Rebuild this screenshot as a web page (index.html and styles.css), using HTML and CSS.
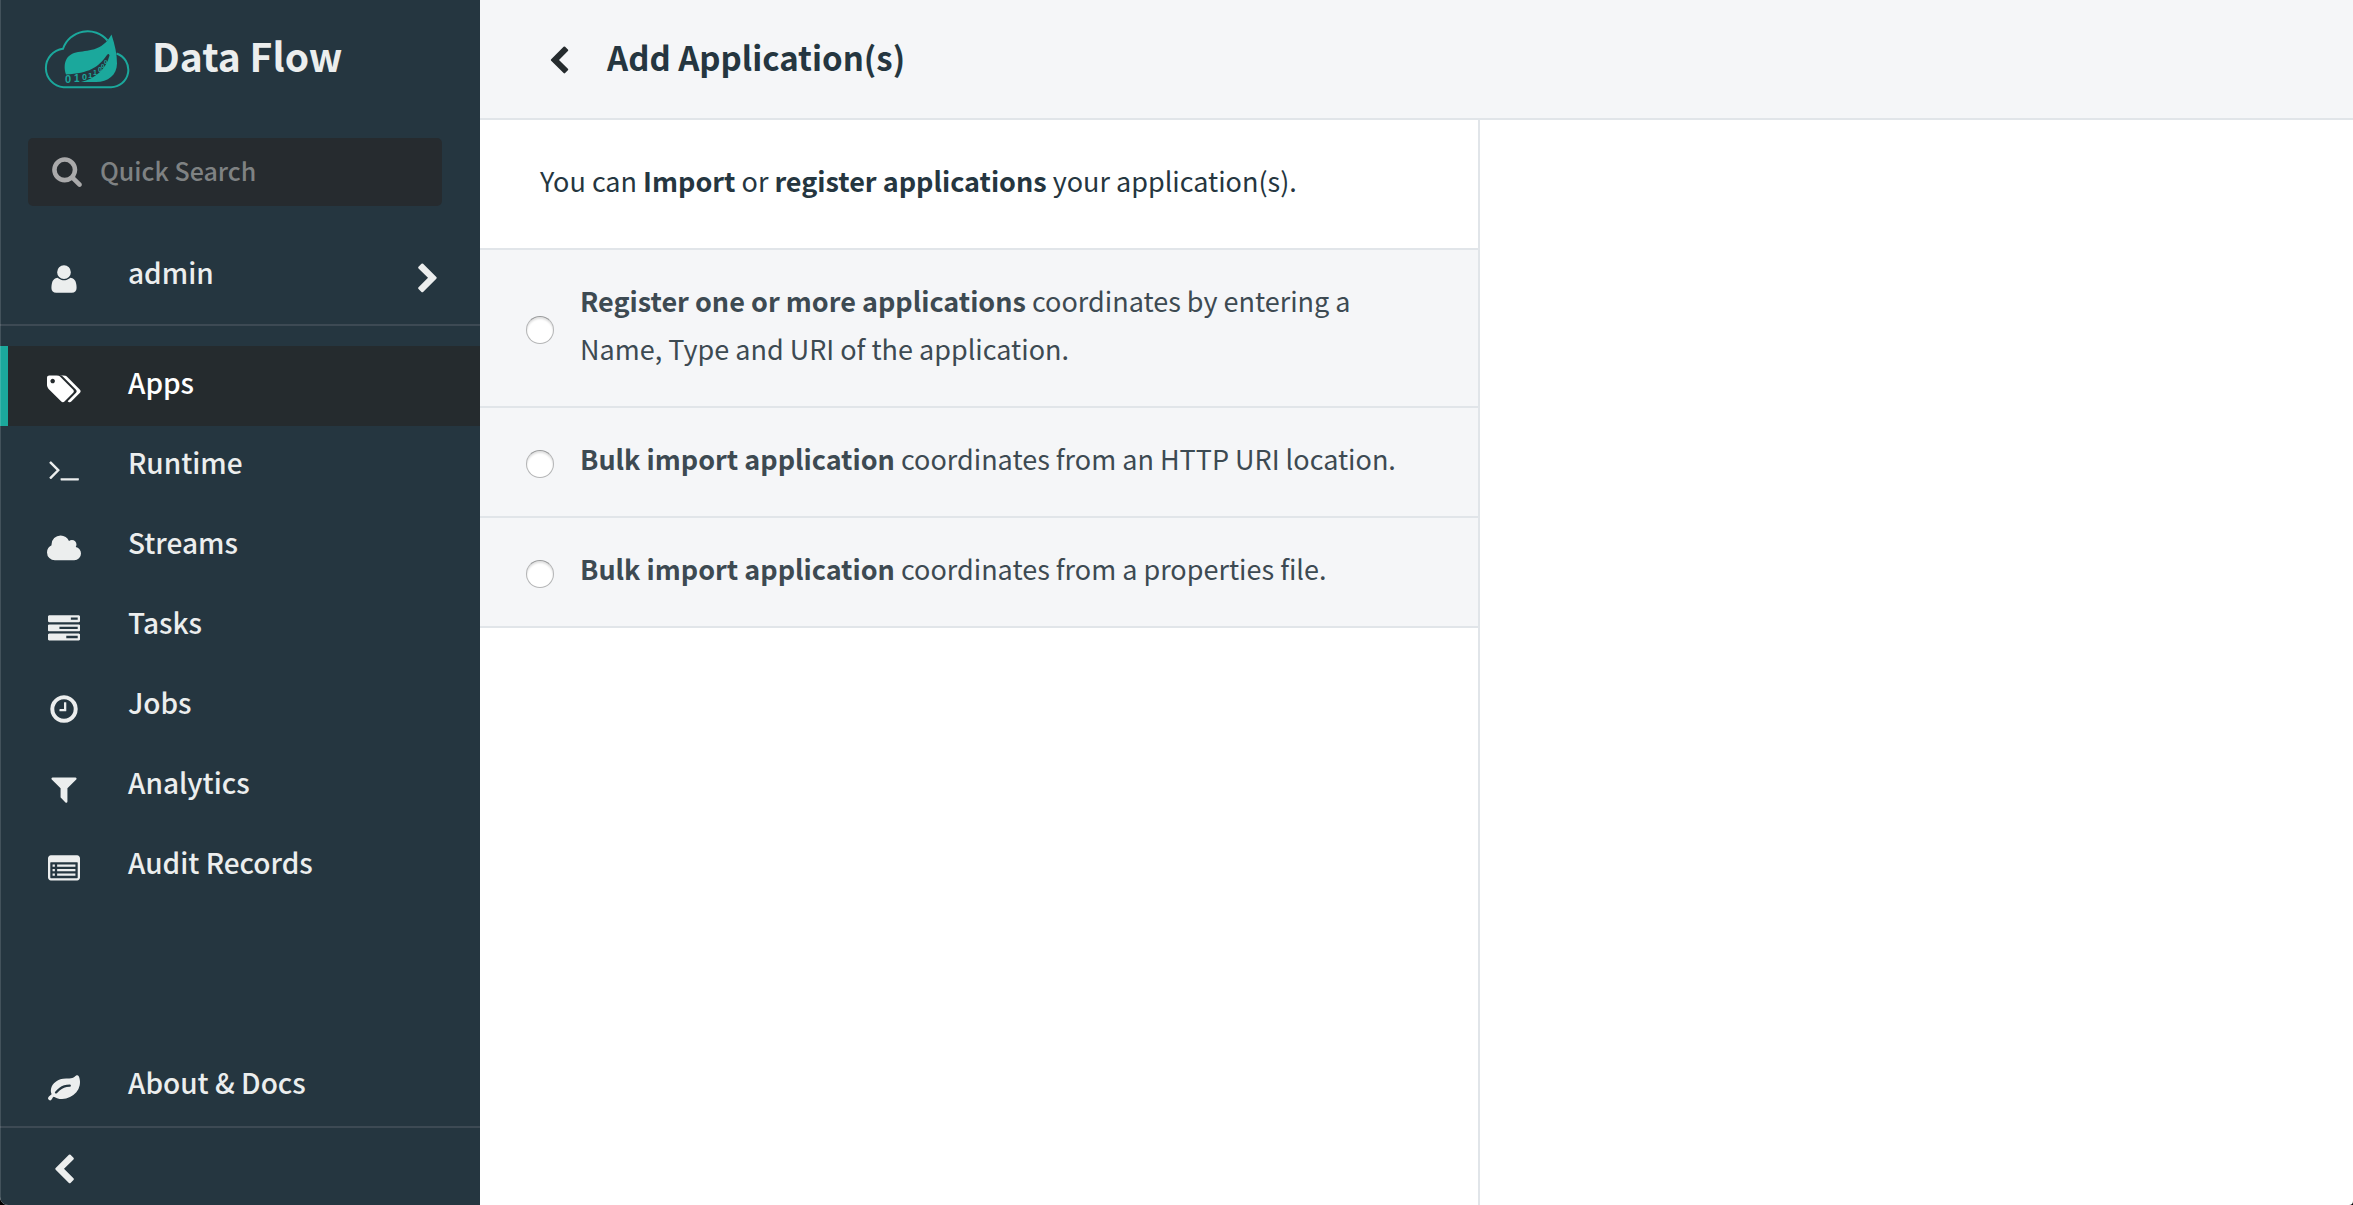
FILE: index.html
```html
<!DOCTYPE html>
<html lang="en">
<head>
<meta charset="utf-8">
<meta name="viewport" content="width=device-width, initial-scale=1">
<title>Data Flow - Add Application(s)</title>
<link rel="stylesheet" href="styles.css">
</head>
<body>
<div class="app">
  <aside class="sidebar">
    <a class="brand" href="#">
      <svg class="brand-logo" viewBox="14 9 87 59" aria-hidden="true">
        <path class="logo-line" d="M78.500 19.500A26 26 0 0 0 34 27.800A19.300 19.300 0 0 0 34.500 66.200H81.500A17.300 17.300 0 0 0 87.500 32.500"/>
        <path class="logo-fill" d="M82.500 13.500C86 24 88 33 88 42.500C88 54 79 61 67 61H52C66 58 77 48 80.500 34.500C80 32.500 79 32.500 78 34C69 47 60 52 37 53.500C34 44 36 34 47 31.500C58 29 73 31 82.500 13.500Z"/>
        <g class="logo-digits">
          <text x="36" y="62" font-size="11">0</text>
          <text x="45" y="61" font-size="10">1</text>
          <text x="53" y="59" font-size="9">0</text>
          <text x="59" y="57" font-size="8">1</text>
          <text x="64" y="54" font-size="7">1</text>
          <text x="69" y="51" font-size="7">0</text>
          <text x="72" y="47" font-size="6">0</text>
          <text x="75" y="43" font-size="6">0</text>
        </g>
      </svg>
      <span class="brand-name">Data Flow</span>
    </a>

    <label class="search">
      <svg class="search-icon" viewBox="0 0 1792 1792" aria-hidden="true"><path d="M1216 832q0-185-131.500-316.500t-316.500-131.500-316.500 131.500-131.500 316.500 131.500 316.500 316.500 131.500 316.500-131.500 131.500-316.500zm512 832q0 52-38 90t-90 38q-54 0-90-38l-343-342q-179 124-399 124-143 0-273.500-55.500t-225-150-150-225-55.500-273.500 55.500-273.500 150-225 225-150 273.500-55.500 273.500 55.500 225 150 150 225 55.500 273.500q0 220-124 399l343 343q37 37 37 90z"/></svg>
      <input class="search-input" type="text" placeholder="Quick Search" aria-label="Quick Search">
    </label>

    <button class="nav-item user" type="button">
      <svg class="nav-icon" viewBox="0 0 1792 1792" aria-hidden="true"><path d="M1600 1405q0 120-73 189.500t-194 69.500h-874q-121 0-194-69.500t-73-189.500q0-53 3.500-103.500t14-109 26.500-108.500 43-97.500 62-81 85.500-53.500 111.500-20q9 0 42 21.500t74.500 48 108 48 133.500 21.500 133.500-21.500 108-48 74.500-48 42-21.500q61 0 111.500 20t85.500 53.500 62 81 43 97.500 26.500 108.500 14 109 3.500 103.500zm-320-893q0 159-112.500 271.500t-271.500 112.500-271.500-112.500-112.500-271.500 112.500-271.500 271.500-112.500 271.500 112.500 112.500 271.500z"/></svg>
      <span class="nav-label">admin</span>
      <svg class="nav-icon" viewBox="0 0 1792 1792" aria-hidden="true"><path d="M1363 877l-742 742q-19 19-45 19t-45-19l-166-166q-19-19-19-45t19-45l531-531-531-531q-19-19-19-45t19-45l166-166q19-19 45-19t45 19l742 742q19 19 19 45t-19 45z"/></svg>
    </button>

    <nav class="nav">
      <a class="nav-item active" href="#">
        <svg class="nav-icon" viewBox="0 0 1920 1792" aria-hidden="true"><path d="M448 448q0-53-37.500-90.500t-90.500-37.500-90.500 37.500-37.500 90.500 37.500 90.500 90.500 37.500 90.500-37.500 37.500-90.500zm1067 576q0 53-37 90l-491 492q-39 37-91 37-53 0-90-37l-715-716q-38-37-64.500-101t-26.500-117v-416q0-52 38-90t90-38h416q53 0 117 26.500t102 64.500l715 714q37 39 37 91zm384 0q0 53-37 90l-491 492q-39 37-91 37-36 0-59-14t-53-45l470-470q37-37 37-90 0-52-37-91l-715-714q-38-38-102-64.500t-117-26.500h224q53 0 117 26.500t102 64.500l715 714q37 39 37 91z"/></svg>
        <span class="nav-label">Apps</span>
      </a>
      <a class="nav-item" href="#">
        <svg class="nav-icon" viewBox="0 0 1792 1792" aria-hidden="true"><path d="M649 983l-466 466q-10 10-23 10t-23-10l-50-50q-10-10-10-23t10-23l393-393-393-393q-10-10-10-23t10-23l50-50q10-10 23-10t23 10l466 466q10 10 10 23t-10 23zm1079 457v64q0 14-9 23t-23 9h-960q-14 0-23-9t-9-23v-64q0-14 9-23t23-9h960q14 0 23 9t9 23z"/></svg>
        <span class="nav-label">Runtime</span>
      </a>
      <a class="nav-item" href="#">
        <svg class="nav-icon" viewBox="0 0 1920 1792" aria-hidden="true"><path d="M1920 1152q0 159-112.500 271.500t-271.500 112.500h-1088q-185 0-316.500-131.500t-131.500-316.500q0-132 71-241.500t187-163.500q-2-28-2-43 0-212 150-362t362-150q158 0 286.500 88t187.500 230q70-62 166-62 106 0 181 75t75 181q0 75-41 138 129 30 213 134.500t84 239.500z"/></svg>
        <span class="nav-label">Streams</span>
      </a>
      <a class="nav-item" href="#">
        <svg class="nav-icon" viewBox="0 0 1792 1792" aria-hidden="true"><path d="M1024 1408h640v-128h-640v128zm-384-512h1024v-128h-1024v128zm640-512h384v-128h-384v128zm512 832v256q0 26-19 45t-45 19h-1664q-26 0-45-19t-19-45v-256q0-26 19-45t45-19h1664q26 0 45 19t19 45zm0-512v256q0 26-19 45t-45 19h-1664q-26 0-45-19t-19-45v-256q0-26 19-45t45-19h1664q26 0 45 19t19 45zm0-512v256q0 26-19 45t-45 19h-1664q-26 0-45-19t-19-45v-256q0-26 19-45t45-19h1664q26 0 45 19t19 45z"/></svg>
        <span class="nav-label">Tasks</span>
      </a>
      <a class="nav-item" href="#">
        <svg class="nav-icon" viewBox="0 0 1792 1792" aria-hidden="true"><path d="M1024 544v448q0 14-9 23t-23 9h-320q-14 0-23-9t-9-23v-64q0-14 9-23t23-9h224v-352q0-14 9-23t23-9h64q14 0 23 9t9 23zm416 352q0-148-73-273t-198-198-273-73-273 73-198 198-73 273 73 273 198 198 273 73 273-73 198-198 73-273zm224 0q0 209-103 385.500t-279.500 279.500-385.500 103-385.500-103-279.500-279.500-103-385.500 103-385.500 279.500-279.500 385.500-103 385.500 103 279.500 279.500 103 385.500z"/></svg>
        <span class="nav-label">Jobs</span>
      </a>
      <a class="nav-item" href="#">
        <svg class="nav-icon" viewBox="0 0 1792 1792" aria-hidden="true"><path d="M1595 295q17 41-14 70l-493 493v742q0 42-39 59-13 5-25 5-27 0-45-19l-256-256q-19-19-19-45v-486l-493-493q-31-29-14-70 17-39 59-39h1280q42 0 59 39z"/></svg>
        <span class="nav-label">Analytics</span>
      </a>
      <a class="nav-item" href="#">
        <svg class="nav-icon" viewBox="0 0 1792 1792" aria-hidden="true"><path fill-rule="evenodd" d="M160 128h1472q66 0 113 47t47 113v1088q0 66-47 113t-113 47h-1472q-66 0-113-47t-47-113v-1088q0-66 47-113t113-47zM160 512q-32 0-32 32v832q0 32 32 32h1472q32 0 32-32v-832q0-32-32-32z"/><path d="M256 640h128v128h-128zM256 896h128v128h-128zM256 1152h128v128h-128zM512 640h1024v128h-1024zM512 896h1024v128h-1024zM512 1152h1024v128h-1024z"/></svg>
        <span class="nav-label">Audit Records</span>
      </a>
    </nav>

    <div class="sidebar-foot">
      <a class="nav-item" href="#">
        <svg class="nav-icon" viewBox="0 0 1792 1792" aria-hidden="true"><path d="M1280 704q0-26-19-45t-45-19q-172 0-318 49.500t-259.500 134-235.500 219.500q-19 21-19 45 0 26 19 45t45 19q24 0 45-19 27-24 74-71t67-66q137-124 268.500-176t313.500-52q26 0 45-19t19-45zm512-198q0 95-20 193-46 224-184.500 383t-357.500 268q-214 108-438 108-148 0-286-47-15-5-88-42t-96-37q-16 0-39.500 32t-45 70-52.500 70-60 32q-43 0-63.500-17.500t-45.500-59.500q-2-4-6-11t-5.500-10-3-9.500-1.500-13.500q0-35 31-73.500t68-65.500 68-56 31-48q0-4-14-38t-16-44q-9-51-9-104 0-115 43.500-220t119-184.500 170.500-139 204-95.500q55-18 145-25.500t179.500-9 178.500-6 163.500-24 113.500-56.500l29.500-29.500 29.500-28 27-20 36.500-16 43.500-4.500q39 0 70.500 46t47.500 112 24 124 8 96z"/></svg>
        <span class="nav-label">About &amp; Docs</span>
      </a>
      <button class="collapse" type="button" aria-label="Collapse menu">
        <svg class="nav-icon" viewBox="0 0 1792 1792" aria-hidden="true"><path d="M1427 301l-531 531 531 531q19 19 19 45t-19 45l-166 166q-19 19-45 19t-45-19l-742-742q-19-19-19-45t19-45l742-742q19-19 45-19t45 19l166 166q19 19 19 45t-19 45z"/></svg>
      </button>
    </div>
  </aside>

  <main class="main">
    <header class="page-head">
      <a class="back" href="#" aria-label="Back">
        <svg class="back-icon" viewBox="0 0 1792 1792" aria-hidden="true"><path d="M1427 301l-531 531 531 531q19 19 19 45t-19 45l-166 166q-19 19-45 19t-45-19l-742-742q-19-19-19-45t19-45l742-742q19-19 45-19t45 19l166 166q19 19 19 45t-19 45z"/></svg>
      </a>
      <h1 class="page-title">Add Application(s)</h1>
    </header>
    <div class="columns">
      <section class="panel">
        <p class="intro">You can <strong>Import</strong> or <strong>register applications</strong> your application(s).</p>
        <label class="option">
          <input class="option-radio" type="radio" name="method">
          <span class="option-text"><strong>Register one or more applications</strong> coordinates by entering a Name, Type and URI of the application.</span>
        </label>
        <label class="option">
          <input class="option-radio" type="radio" name="method">
          <span class="option-text"><strong>Bulk import application</strong> coordinates from an HTTP URI location.</span>
        </label>
        <label class="option">
          <input class="option-radio" type="radio" name="method">
          <span class="option-text"><strong>Bulk import application</strong> coordinates from a properties file.</span>
        </label>
      </section>
    </div>
  </main>
</div>
</body>
</html>
```

FILE: styles.css
```css
* {
  box-sizing: border-box;
}

body {
  margin: 0;
  background: #000;
  color: #253640;
  font-family: "Noto Sans CJK SC", "Open Sans", sans-serif;
  font-size: 27px;
  line-height: 48px;
}

button,
input {
  font: inherit;
  color: inherit;
}

strong {
  font-weight: 700;
}

.app {
  display: flex;
  min-height: 100vh;
  overflow: hidden;
  background: #fff;
  border-radius: 0 0 4px 8px;
}

/* Sidebar */
.sidebar {
  position: relative;
  display: flex;
  flex-direction: column;
  flex: 0 0 480px;
  background: #253640;
  color: #eceeee;
}

.sidebar::after {
  content: "";
  position: absolute;
  inset: 0 auto 0 0;
  width: 1px;
  background: rgba(255, 255, 255, 0.14);
}

.brand {
  display: flex;
  align-items: center;
  gap: 22px;
  padding: 26px 43px 45px;
  color: inherit;
  text-decoration: none;
}

.brand-logo {
  width: 87px;
  height: 59px;
}

.logo-line {
  fill: none;
  stroke: #1ba89c;
  stroke-width: 2;
}

.logo-fill,
.logo-digits {
  fill: #1ba89c;
}

.logo-digits {
  font-family: "Liberation Sans", sans-serif;
  font-weight: 700;
}

.brand-name {
  font-size: 39px;
  font-weight: 700;
  line-height: 59px;
  margin-bottom: 8px;
}

.search {
  display: flex;
  align-items: center;
  gap: 17px;
  height: 68px;
  margin: 0 38px 30px 28px;
  padding: 0 23px 2px;
  border-radius: 5px;
  background: #262b2f;
}

.search-icon {
  flex: none;
  width: 32px;
  height: 32px;
  fill: #aaaaab;
}

.search-input {
  flex: 1;
  min-width: 0;
  padding: 0 0 2px;
  border: 0;
  outline: 0;
  background: transparent;
  font-size: 25px;
  font-weight: 500;
}

.search-input::placeholder {
  color: #7f8283;
  opacity: 1;
}

.nav-item {
  display: flex;
  align-items: center;
  gap: 47px;
  width: 100%;
  height: 80px;
  padding: 0 35px 0 47px;
  border: 0;
  background: transparent;
  color: inherit;
  font-size: 28px;
  font-weight: 500;
  text-align: left;
  text-decoration: none;
}

.nav-icon {
  flex: none;
  width: 34px;
  height: 32px;
  margin-top: 5px;
  fill: currentColor;
}

.nav-label {
  flex: 1;
  margin-bottom: 9px;
}

.user {
  height: 90px;
  padding-bottom: 8px;
  border-bottom: 2px solid #3d4a54;
}

.nav {
  padding: 20px 0;
}

.active {
  border-left: 8px solid #1ba89c;
  padding-left: 39px;
  background: #252b2e;
  color: #fff;
}

.sidebar-foot {
  margin-top: auto;
}

.collapse {
  display: flex;
  align-items: center;
  width: 100%;
  height: 79px;
  padding: 2px 47px 0;
  border: 0;
  border-top: 2px solid #3d4a54;
  background: transparent;
}

/* Page */
.main {
  display: flex;
  flex: 1;
  flex-direction: column;
  min-width: 0;
}

.page-head {
  display: flex;
  align-items: center;
  gap: 33px;
  height: 120px;
  padding: 0 64px;
  border-bottom: 2px solid #e1e5e9;
  background: #f5f6f8;
}

.back {
  display: flex;
  color: #252b2e;
}

.back-icon {
  width: 30px;
  height: 30px;
  margin-top: 4px;
  fill: currentColor;
}

.page-title {
  margin: 0 0 4px;
  font-size: 33px;
  font-weight: 700;
}

.columns {
  display: grid;
  grid-template-columns: minmax(0, 1000px) minmax(0, 1fr);
  flex: 1;
}

.panel {
  border-right: 2px solid #e1e5e9;
}

.intro {
  margin: 0;
  padding: 37px 60px 43px;
  border-bottom: 2px solid #e1e5e9;
}

.option {
  display: flex;
  align-items: center;
  gap: 26px;
  padding: 27px 60px 33px 46px;
  border-bottom: 2px solid #e1e5e9;
  background: #f5f6f8;
  color: #3d4a52;
}

.option-radio {
  appearance: none;
  flex: none;
  width: 28px;
  height: 28px;
  margin: 10px 0 0;
  border: 1px solid #b4b5b6;
  border-top-color: #9a9b9c;
  border-radius: 50%;
  background: #fff;
  box-shadow: inset 0 2px 2px rgba(0, 0, 0, 0.12);
}

.option-radio:checked {
  background: radial-gradient(#1ba89c 40%, #fff 45%);
}
```
